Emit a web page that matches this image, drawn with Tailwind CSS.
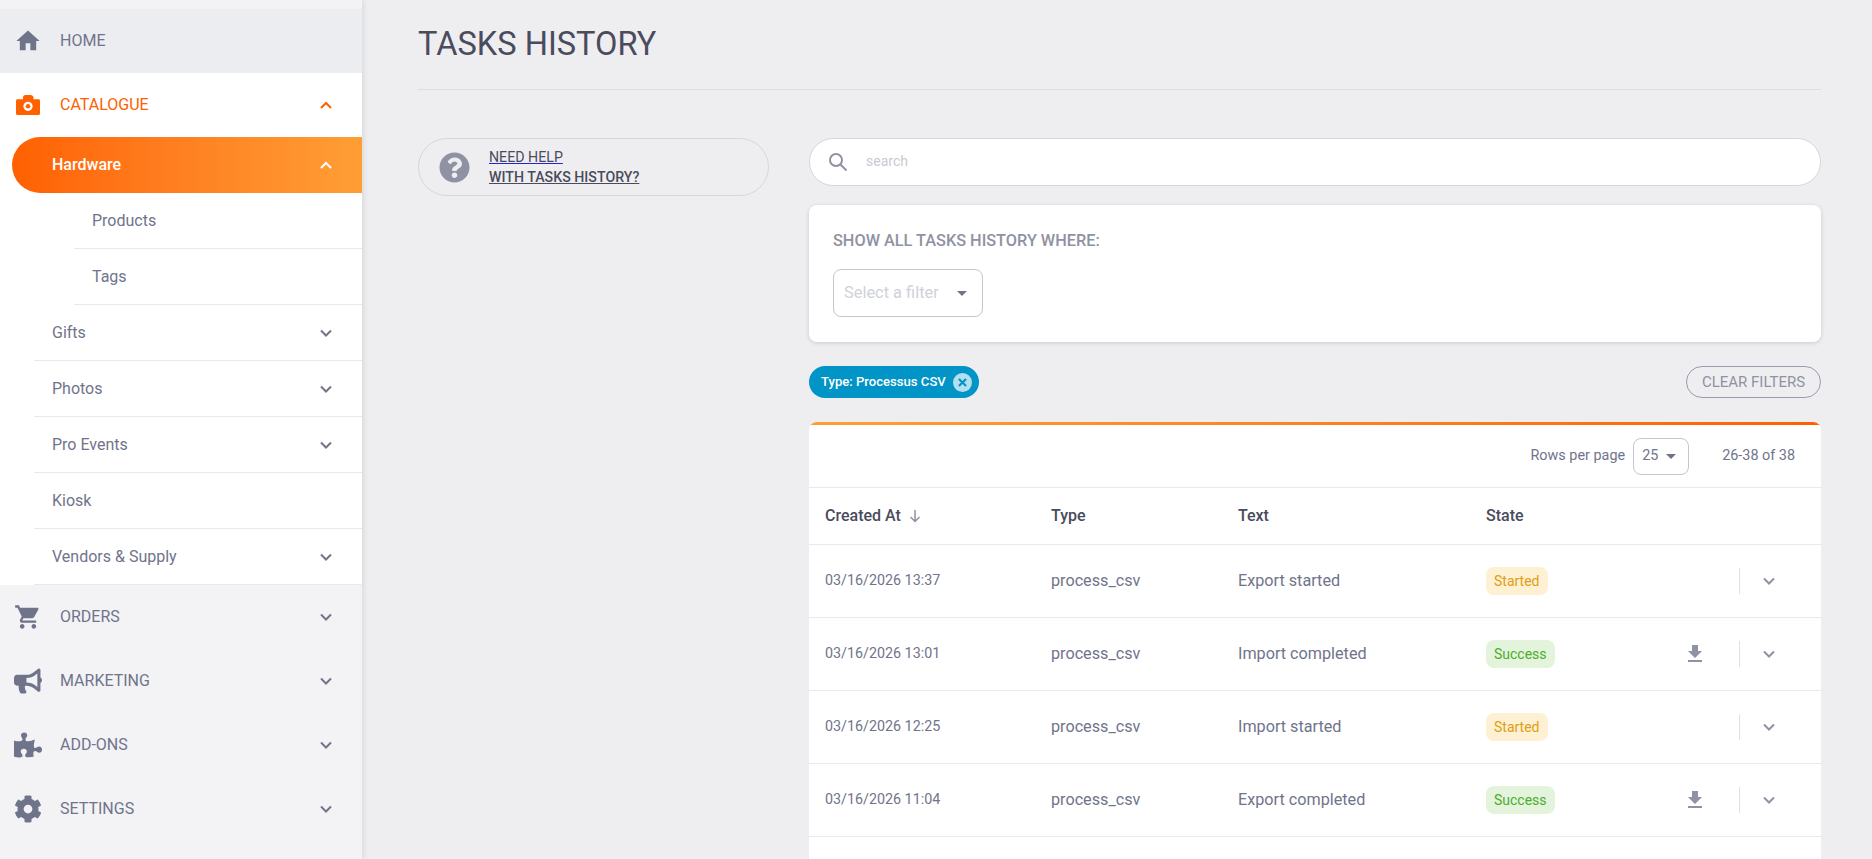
<!DOCTYPE html>
<html lang="en">
<head>
    <meta charset="UTF-8">
    <title>Tasks History</title>
    <script src="https://cdn.jsdelivr.net/npm/@tailwindcss/browser@4"></script>
</head>
<body class="bg-[#eeeef1] h-[859px] overflow-hidden flex font-['Roboto',sans-serif] text-[#70748b]">

    <!-- sidebar -->
    <aside class="w-[362px] h-full shrink-0 bg-[#f3f3f6] pt-[9px] shadow-[2px_0_5px_rgba(0,0,0,0.08)]">
        <a class="h-16 flex items-center bg-[#ecedf1]">
            <span class="w-[56px] mr-1 flex justify-center">
                <svg class="w-7 h-7 fill-[#70748b]" viewBox="0 0 24 24"><path d="M10 20v-6h4v6h5v-8h3L12 3 2 12h3v8z"/></svg>
            </span>
            <span class="text-base">HOME</span>
        </a>

        <div class="bg-white">
            <div class="h-16 flex items-center text-[#ff6000]">
                <span class="w-[56px] mr-1 flex justify-center">
                    <svg class="w-6 h-6" viewBox="0 0 24 24">
                        <path fill="#ff6000" d="M1.5 6.3H7V4.5C7 3 8 2 9.5 2h5C16 2 17.5 3 17.5 4.5v1.8h5c.8 0 1.5.7 1.5 1.5v12.7c0 .8-.7 1.5-1.5 1.5h-21C.7 22 0 21.3 0 20.5V7.8c0-.8.7-1.5 1.5-1.5z"/>
                        <circle cx="12" cy="13.3" r="4.6" fill="#ffffff"/>
                        <circle cx="12" cy="13.3" r="2.2" fill="#ff6000"/>
                    </svg>
                </span>
                <span class="text-base flex-1">CATALOGUE</span>
                <svg class="w-6 h-6 mr-6 fill-none stroke-[#ff6000] stroke-2" viewBox="0 0 24 24"><path d="M7 15l5-5 5 5"/></svg>
            </div>
            <div class="h-14 ml-3 flex items-center rounded-l-[28px] bg-gradient-to-r from-[#ff6000] to-[#ff9e35] text-white">
                <span class="text-base font-medium pl-10 flex-1">Hardware</span>
                <svg class="w-6 h-6 mr-6 fill-none stroke-white stroke-2" viewBox="0 0 24 24"><path d="M7 15l5-5 5 5"/></svg>
            </div>
            <div class="ml-[74px] h-14 flex items-center border-b border-[#e8e9ed] pl-[18px] text-base">Products</div>
            <div class="ml-[74px] h-14 flex items-center border-b border-[#e8e9ed] pl-[18px] text-base">Tags</div>
            <div class="ml-[34px] h-14 flex items-center border-b border-[#e8e9ed] pl-[18px] text-base">
                <span class="flex-1">Gifts</span>
                <svg class="w-6 h-6 mr-6 fill-none stroke-[#70748b] stroke-2" viewBox="0 0 24 24"><path d="M7 9.5l5 5 5-5"/></svg>
            </div>
            <div class="ml-[34px] h-14 flex items-center border-b border-[#e8e9ed] pl-[18px] text-base">
                <span class="flex-1">Photos</span>
                <svg class="w-6 h-6 mr-6 fill-none stroke-[#70748b] stroke-2" viewBox="0 0 24 24"><path d="M7 9.5l5 5 5-5"/></svg>
            </div>
            <div class="ml-[34px] h-14 flex items-center border-b border-[#e8e9ed] pl-[18px] text-base">
                <span class="flex-1">Pro Events</span>
                <svg class="w-6 h-6 mr-6 fill-none stroke-[#70748b] stroke-2" viewBox="0 0 24 24"><path d="M7 9.5l5 5 5-5"/></svg>
            </div>
            <div class="ml-[34px] h-14 flex items-center border-b border-[#e8e9ed] pl-[18px] text-base">Kiosk</div>
            <div class="ml-[34px] h-14 flex items-center border-b border-[#e8e9ed] pl-[18px] text-base">
                <span class="flex-1">Vendors &amp; Supply</span>
                <svg class="w-6 h-6 mr-6 fill-none stroke-[#70748b] stroke-2" viewBox="0 0 24 24"><path d="M7 9.5l5 5 5-5"/></svg>
            </div>
        </div>

        <a class="h-16 flex items-center">
            <span class="w-[56px] mr-1 flex justify-center">
                <svg class="w-7 h-7 fill-[#70748b]" viewBox="0 0 24 24"><path d="M7 18c-1.1 0-1.99.9-1.99 2S5.9 22 7 22s2-.9 2-2-.9-2-2-2zM1 2v2h2l3.6 7.59-1.35 2.45c-.16.28-.25.61-.25.96 0 1.1.9 2 2 2h12v-2H7.42c-.14 0-.25-.11-.25-.25l.03-.1.9-1.63h7.45c.75 0 1.41-.41 1.75-1.03l3.58-6.49c.08-.14.12-.31.12-.48 0-.55-.45-1-1-1H5.21l-.94-2H1zm16 16c-1.1 0-1.99.9-1.99 2s.89 2 1.99 2 2-.9 2-2-.9-2-2-2z"/></svg>
            </span>
            <span class="text-base flex-1">ORDERS</span>
            <svg class="w-6 h-6 mr-6 fill-none stroke-[#70748b] stroke-2" viewBox="0 0 24 24"><path d="M7 9.5l5 5 5-5"/></svg>
        </a>
        <a class="h-16 flex items-center">
            <span class="w-[56px] mr-1 flex justify-center">
                <svg class="w-7 h-7 fill-[#70748b]" viewBox="0 0 576 512"><path d="M576 240c0-23.63-12.95-44.04-32-55.12V32.01C544 23.26 537.02 0 512 0c-7.12 0-14.19 2.38-19.98 7.02l-85.03 68.03C364.28 109.19 310.66 128 256 128H64c-35.35 0-64 28.65-64 64v96c0 35.35 28.65 64 64 64h33.7c-1.39 10.48-2.18 21.14-2.18 32 0 39.77 9.26 77.35 25.56 110.94 5.19 10.69 16.52 17.06 28.4 17.06h74.28c26.05 0 41.69-29.84 25.9-50.56-16.4-21.52-26.15-48.36-26.15-77.44 0-11.11 1.62-21.79 4.41-32H256c54.66 0 108.28 18.81 150.98 52.95l85.03 68.03a32.023 32.023 0 0 0 19.98 7.02c24.92 0 32-22.78 32-32V295.13C563.05 284.04 576 263.63 576 240zm-96 141.42l-33.05-26.44C392.95 311.78 325.12 288 256 288v-96c69.12 0 136.95-23.78 190.95-66.98L480 98.58v282.84z"/></svg>
            </span>
            <span class="text-base flex-1">MARKETING</span>
            <svg class="w-6 h-6 mr-6 fill-none stroke-[#70748b] stroke-2" viewBox="0 0 24 24"><path d="M7 9.5l5 5 5-5"/></svg>
        </a>
        <a class="h-16 flex items-center">
            <span class="w-[56px] mr-1 flex justify-center">
                <svg class="w-7 h-7 fill-[#70748b]" viewBox="0 0 576 512"><path d="M519.442 288.651c-41.519 0-59.5 31.593-82.058 31.593C377.409 320.244 432 144 432 144s-196.288 80-196.288-3.297c0-35.827 36.288-46.25 36.288-85.985C272 19.216 243.885 0 210.539 0c-34.654 0-66.366 18.891-66.366 56.346 0 41.364 31.711 59.277 31.711 81.75C175.885 207.719 0 166.758 0 166.758v333.237s178.635 41.047 178.635-28.662c0-22.473-40-40.107-40-81.471 0-37.456 29.25-56.346 63.577-56.346 33.673 0 61.788 19.216 61.788 54.717 0 39.735-36.288 50.158-36.288 85.985 0 60.803 129.675 25.73 181.23 25.73 0 0-34.725-120.101 25.827-120.101 35.962 0 46.423 36.152 86.308 36.152C556.712 416 576 387.99 576 354.443c0-34.199-18.962-65.792-56.558-65.792z"/></svg>
            </span>
            <span class="text-base flex-1">ADD-ONS</span>
            <svg class="w-6 h-6 mr-6 fill-none stroke-[#70748b] stroke-2" viewBox="0 0 24 24"><path d="M7 9.5l5 5 5-5"/></svg>
        </a>
        <a class="h-16 flex items-center">
            <span class="w-[56px] mr-1 flex justify-center">
                <svg class="w-7 h-7 fill-[#70748b]" viewBox="0 0 512 512"><path d="M487.4 315.7l-42.6-24.6c4.3-23.2 4.3-47 0-70.2l42.6-24.6c4.9-2.8 7.1-8.6 5.5-14-11.1-35.6-30-67.8-54.7-94.6-3.8-4.1-10-5.1-14.8-2.3L380.8 110c-17.9-15.4-38.5-27.3-60.8-35.1V25.8c0-5.6-3.9-10.5-9.4-11.7-36.7-8.2-74.3-7.8-109.2 0-5.5 1.2-9.4 6.1-9.4 11.7V75c-22.2 7.9-42.8 19.8-60.8 35.1L88.7 85.5c-4.9-2.8-11-1.9-14.8 2.3-24.7 26.7-43.6 58.9-54.7 94.6-1.7 5.4.6 11.2 5.5 14L67.3 221c-4.3 23.2-4.3 47 0 70.2l-42.6 24.6c-4.9 2.8-7.1 8.6-5.5 14 11.1 35.6 30 67.8 54.7 94.6 3.8 4.1 10 5.1 14.8 2.3l42.6-24.6c17.9 15.4 38.5 27.3 60.8 35.1v49.2c0 5.6 3.9 10.5 9.4 11.7 36.7 8.2 74.3 7.8 109.2 0 5.5-1.2 9.4-6.1 9.4-11.7v-49.2c22.2-7.9 42.8-19.8 60.8-35.1l42.6 24.6c4.9 2.8 11 1.9 14.8-2.3 24.7-26.7 43.6-58.9 54.7-94.6 1.5-5.5-.7-11.3-5.6-14.1zM256 336c-44.1 0-80-35.9-80-80s35.9-80 80-80 80 35.9 80 80-35.9 80-80 80z"/></svg>
            </span>
            <span class="text-base flex-1">SETTINGS</span>
            <svg class="w-6 h-6 mr-6 fill-none stroke-[#70748b] stroke-2" viewBox="0 0 24 24"><path d="M7 9.5l5 5 5-5"/></svg>
        </a>
    </aside>

    <!-- main -->
    <main class="flex-1 min-w-0 pl-[56px] pr-[51px]">
        <div class="h-[90px] border-b border-[#dcdde3] flex items-center">
            <h1 class="text-[32.6px] text-[#4a4b5c]">TASKS HISTORY</h1>
        </div>

        <div class="flex mt-[48px]">
            <div class="w-[391px] shrink-0">
                <a class="w-[351px] h-[58px] rounded-full border border-[#d6d7dd] flex items-center">
                    <svg class="w-[31px] h-[31px] ml-[20px] fill-[#8f92a3]" viewBox="0 0 512 512"><path d="M504 256c0 136.997-111.043 248-248 248S8 392.997 8 256C8 119.083 119.043 8 256 8s248 111.083 248 248zM262.655 90c-54.497 0-89.255 22.957-116.549 63.758-3.536 5.286-2.353 12.415 2.715 16.258l34.699 26.31c5.205 3.947 12.621 3.008 16.665-2.122 17.864-22.658 30.113-35.797 57.303-35.797 20.429 0 45.698 13.148 45.698 32.958 0 14.976-12.363 22.667-32.534 33.976C247.128 238.528 216 254.941 216 296v4c0 6.627 5.373 12 12 12h56c6.627 0 12-5.373 12-12v-1.333c0-28.462 83.186-29.647 83.186-106.667 0-58.002-60.165-102-116.531-102zM256 338c-25.365 0-46 20.635-46 46 0 25.364 20.635 46 46 46s46-20.636 46-46c0-25.365-20.635-46-46-46z"/></svg>
                    <span class="ml-[19px] text-[14.2px] leading-5 text-[#4a4b5c]">
                        <span class="block underline decoration-[#2222dd]">NEED HELP</span>
                        <span class="block underline font-medium">WITH TASKS HISTORY?</span>
                    </span>
                </a>
            </div>

            <div class="flex-1 min-w-0">
                <div class="h-[48px] bg-white rounded-full border border-[#d6d7dd] flex items-center">
                    <svg class="w-6 h-6 ml-[16px] fill-none stroke-[#8f92a3] stroke-2" viewBox="0 0 24 24"><circle cx="10" cy="10" r="6"/><path d="M14.5 14.5l6 6"/></svg>
                    <span class="ml-[16px] pb-[2px] text-sm text-[#c9cad3]">search</span>
                </div>

                <div class="mt-[19px] h-[137px] bg-white rounded-lg shadow-[0_1px_4px_rgba(0,0,0,0.15)] px-6 pt-[26px]">
                    <p class="text-[16.3px] font-medium leading-[20px] text-[#8f92a3]">SHOW ALL TASKS HISTORY WHERE:</p>
                    <div class="mt-[18px] w-[150px] h-[48px] rounded-lg border border-[#c4c5ce] flex items-center pl-2.5 pr-[15px]">
                        <span class="flex-1 text-[16.4px] text-[#d0d1da]">Select a filter</span>
                        <span class="w-0 h-0 border-x-[5px] border-x-transparent border-t-[5px] border-t-[#70748b]"></span>
                    </div>
                </div>

                <div class="mt-6 h-8 flex items-center justify-between">
                    <span class="h-8 pl-[12px] pr-[7px] rounded-full bg-[#0095c6] text-white text-[13.1px] font-medium flex items-center">
                        Type: Processus CSV
                        <svg class="w-[19px] h-[19px] ml-[7px]" viewBox="0 0 16 16"><circle cx="8" cy="8" r="8" fill="#ffffff" fill-opacity="0.7"/><path d="M5 5l6 6M11 5l-6 6" stroke="#0095c6" stroke-width="1.8" fill="none"/></svg>
                    </span>
                    <span class="w-[135px] h-8 rounded-full border border-[#9a9cad] flex items-center justify-center text-[15px] text-[#8f92a3]">CLEAR FILTERS</span>
                </div>

                <div class="mt-6 bg-white rounded-t-lg pt-[3px] relative overflow-hidden">
                    <div class="absolute top-0 left-0 right-0 h-[3px] bg-gradient-to-r from-[#ff9e35] to-[#ff6000]"></div>

                    <div class="h-[63px] flex items-center justify-end border-b border-[#e8e9ed] pr-[26px]">
                        <span class="text-[14.4px]">Rows per page</span>
                        <span class="ml-2 w-[56px] h-[37px] rounded-lg border border-[#c4c5ce] flex items-center pl-2 text-[14.4px]">
                            25
                            <span class="ml-2 w-0 h-0 border-x-[5px] border-x-transparent border-t-[5px] border-t-[#70748b]"></span>
                        </span>
                        <span class="ml-[33px] text-[14.4px]">26-38 of 38</span>
                    </div>

                    <div class="h-[57px] grid grid-cols-[226px_187px_248px_1fr] items-center border-b border-[#e8e9ed] pl-4 text-base font-medium text-[#4a4b5c]">
                        <span class="flex items-center">Created At
                            <svg class="w-4 h-4 ml-[6px] fill-none stroke-[#8f92a3] stroke-[1.5]" viewBox="0 0 16 16"><path d="M8 2v11.5M3.5 9L8 13.5 12.5 9"/></svg>
                        </span>
                        <span>Type</span>
                        <span>Text</span>
                        <span>State</span>
                    </div>

                    <div class="h-[73px] grid grid-cols-[226px_187px_248px_1fr] items-center border-b border-[#e8e9ed] pl-4 text-[16.2px]">
                        <span class="text-[14.3px]">03/16/2026 13:37</span>
                        <span>process_csv</span>
                        <span>Export started</span>
                        <div class="flex items-center">
                            <span class="h-7 px-2 rounded-lg bg-[#fdf0d3] text-[#df9f12] text-sm flex items-center">Started</span>
                            <span class="ml-auto h-[26px] border-l border-[#e0e1e6]"></span>
                            <svg class="w-6 h-6 ml-[17px] mr-[40px] fill-none stroke-[#8f92a3] stroke-2" viewBox="0 0 24 24"><path d="M7 9.5l5 5 5-5"/></svg>
                        </div>
                    </div>
                    <div class="h-[73px] grid grid-cols-[226px_187px_248px_1fr] items-center border-b border-[#e8e9ed] pl-4 text-[16.2px]">
                        <span class="text-[14.3px]">03/16/2026 13:01</span>
                        <span>process_csv</span>
                        <span>Import completed</span>
                        <div class="flex items-center">
                            <span class="h-7 px-2 rounded-lg bg-[#e4f3dc] text-[#4dad2b] text-sm flex items-center">Success</span>
                            <svg class="w-6 h-6 ml-auto mr-[32px] fill-[#8f92a3]" viewBox="0 0 24 24"><path d="M19 9h-4V3H9v6H5l7 7 7-7zM5 18v2h14v-2H5z"/></svg>
                            <span class="h-[26px] border-l border-[#e0e1e6]"></span>
                            <svg class="w-6 h-6 ml-[17px] mr-[40px] fill-none stroke-[#8f92a3] stroke-2" viewBox="0 0 24 24"><path d="M7 9.5l5 5 5-5"/></svg>
                        </div>
                    </div>
                    <div class="h-[73px] grid grid-cols-[226px_187px_248px_1fr] items-center border-b border-[#e8e9ed] pl-4 text-[16.2px]">
                        <span class="text-[14.3px]">03/16/2026 12:25</span>
                        <span>process_csv</span>
                        <span>Import started</span>
                        <div class="flex items-center">
                            <span class="h-7 px-2 rounded-lg bg-[#fdf0d3] text-[#df9f12] text-sm flex items-center">Started</span>
                            <span class="ml-auto h-[26px] border-l border-[#e0e1e6]"></span>
                            <svg class="w-6 h-6 ml-[17px] mr-[40px] fill-none stroke-[#8f92a3] stroke-2" viewBox="0 0 24 24"><path d="M7 9.5l5 5 5-5"/></svg>
                        </div>
                    </div>
                    <div class="h-[73px] grid grid-cols-[226px_187px_248px_1fr] items-center border-b border-[#e8e9ed] pl-4 text-[16.2px]">
                        <span class="text-[14.3px]">03/16/2026 11:04</span>
                        <span>process_csv</span>
                        <span>Export completed</span>
                        <div class="flex items-center">
                            <span class="h-7 px-2 rounded-lg bg-[#e4f3dc] text-[#4dad2b] text-sm flex items-center">Success</span>
                            <svg class="w-6 h-6 ml-auto mr-[32px] fill-[#8f92a3]" viewBox="0 0 24 24"><path d="M19 9h-4V3H9v6H5l7 7 7-7zM5 18v2h14v-2H5z"/></svg>
                            <span class="h-[26px] border-l border-[#e0e1e6]"></span>
                            <svg class="w-6 h-6 ml-[17px] mr-[40px] fill-none stroke-[#8f92a3] stroke-2" viewBox="0 0 24 24"><path d="M7 9.5l5 5 5-5"/></svg>
                        </div>
                    </div>
                    <div class="h-[23px]"></div>
                </div>
            </div>
        </div>
    </main>
</body>
</html>
